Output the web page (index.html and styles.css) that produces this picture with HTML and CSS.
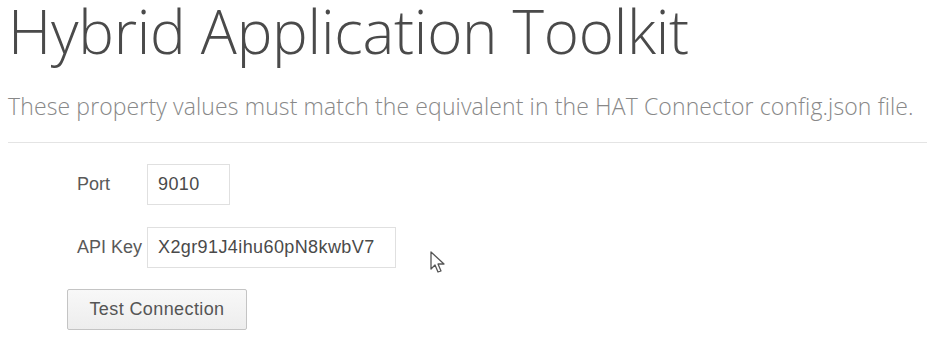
FILE: index.html
```html
<!DOCTYPE html>
<html lang="en">
<head>
  <meta charset="UTF-8">
  <title>Hybrid Application Toolkit</title>
  <link rel="stylesheet" href="styles.css">
</head>
<body>
  <header class="page-header">
    <h1>Hybrid Application Toolkit</h1>
    <p class="lead">These property values must match the equivalent in the HAT Connector config.json file.</p>
  </header>

  <form class="settings-form">
    <div class="form-row">
      <label for="port">Port</label>
      <input type="text" id="port" class="port-input" value="9010">
    </div>
    <div class="form-row">
      <label for="apikey">API Key</label>
      <input type="text" id="apikey" class="key-input" value="X2gr91J4ihu60pN8kwbV7">
    </div>
    <button type="button" class="test-btn">Test Connection</button>
  </form>

  <svg class="cursor" width="20" height="26" viewBox="0 0 20 26">
    <path d="M1 1 L1 18 L5 14 L8 21 L11 20 L8 13 L14 13 Z" fill="#fff" stroke="#555" stroke-width="1.3" stroke-linejoin="round"/>
  </svg>
</body>
</html>
```

FILE: styles.css
```css
body {
  margin: 0;
  padding: 0 0 0 8px;
  background: #fff;
  position: relative;
  font-family: "Liberation Sans", Arial, sans-serif;
  overflow: hidden;
}

.page-header {
  border-bottom: 1px solid #e4e4e4;
  padding-bottom: 21px;
}

.page-header h1 {
  margin: 0;
  font-family: "Open Sans", sans-serif;
  font-weight: 300;
  font-size: 60px;
  line-height: 62px;
  color: #4a4a4a;
  letter-spacing: -0.25px;
  white-space: nowrap;
}

.lead {
  margin: 29px 0 0;
  font-family: "Open Sans", sans-serif;
  font-weight: 300;
  font-size: 23px;
  line-height: 30px;
  color: #888;
  letter-spacing: 0.12px;
  white-space: nowrap;
}

.settings-form {
  padding: 21px 0 0 59px;
  display: flex;
  flex-direction: column;
  align-items: flex-start;
}

.form-row {
  display: flex;
  align-items: center;
  margin-bottom: 22px;
}

.form-row label {
  width: 70px;
  padding-left: 10px;
  font-size: 18px;
  color: #595959;
}

.form-row input {
  height: 41px;
  box-sizing: border-box;
  border: 1px solid #e0e0e0;
  padding: 0 10px;
  font-family: "Liberation Sans", Arial, sans-serif;
  font-size: 18px;
  letter-spacing: 0.4px;
  color: #4a4a4a;
  outline: none;
}

.port-input {
  width: 83px;
}

.key-input {
  width: 249px;
}

.test-btn {
  margin-top: -1px;
  width: 180px;
  height: 41px;
  background: linear-gradient(#f8f8f8, #ededed);
  border: 1px solid #c4c4c4;
  border-radius: 2px;
  font-family: "Liberation Sans", Arial, sans-serif;
  font-size: 18px;
  letter-spacing: 0.4px;
  color: #555;
}

.cursor {
  position: absolute;
  left: 430px;
  top: 251px;
}
```
